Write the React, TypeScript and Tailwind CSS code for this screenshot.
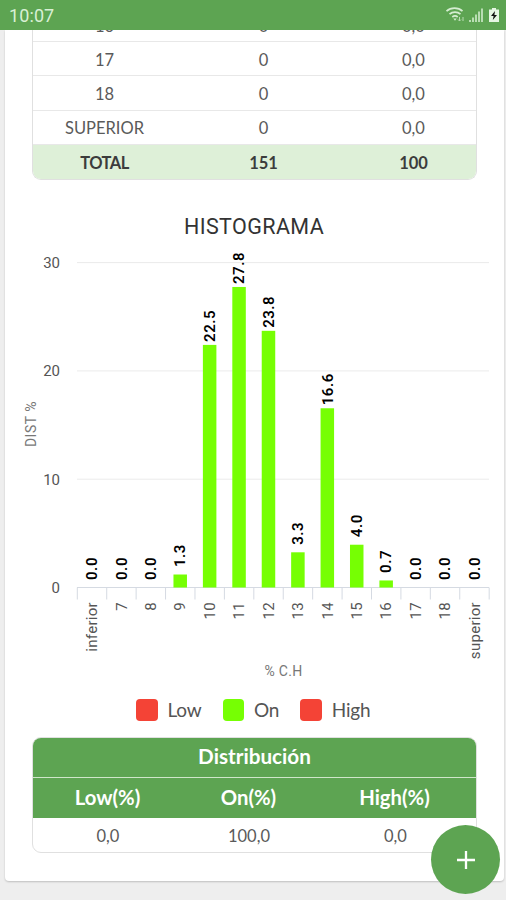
import clsx from "clsx";

const rows = [
  { label: "16", count: "0", dist: "0,0" },
  { label: "17", count: "0", dist: "0,0" },
  { label: "18", count: "0", dist: "0,0" },
  { label: "SUPERIOR", count: "0", dist: "0,0" },
];

const bars = [
  { label: "inferior", value: 0 },
  { label: "7", value: 0 },
  { label: "8", value: 0 },
  { label: "9", value: 1.2, text: "1.3" },
  { label: "10", value: 22.4, text: "22.5" },
  { label: "11", value: 27.75, text: "27.8" },
  { label: "12", value: 23.7, text: "23.8" },
  { label: "13", value: 3.25, text: "3.3" },
  { label: "14", value: 16.55, text: "16.6" },
  { label: "15", value: 3.95, text: "4.0" },
  { label: "16", value: 0.65, text: "0.7" },
  { label: "17", value: 0 },
  { label: "18", value: 0 },
  { label: "superior", value: 0 },
];

const legend = [
  { label: "Low", color: "bg-[#f44336]" },
  { label: "On", color: "bg-[#76ff03]" },
  { label: "High", color: "bg-[#f44336]" },
];

// plot area
const LEFT = 72;
const STEP = 29.42;
const BASE = 397.5;
const UNIT = 10.83;

const StatusBar = () => {
  return (
    <div className="relative z-10 flex h-[30px] items-center justify-between bg-[#5da452] pl-[9px] pr-[6px]">
      <span className="font-[Roboto] text-[18px] leading-none tracking-[0.1px] text-[#d9f0d5] pt-[2px]">10:07</span>

      <svg width="54" height="18" viewBox="0 0 54 18" fill="none">
        <g stroke="#d5edd1" strokeWidth="1.7">
          <path d="M.5 5.200c4.300-4 11.700-4 16 0" />
          <path d="M3.500 8.200c3-2.700 8-2.700 11 0" />
          <path d="M6.300 11c1.700-1.400 3.700-1.400 5.400 0" />
        </g>
        <path d="M7.300 12.600h3.400L9 14.800z" fill="#d5edd1" />
        <path d="M13.500 11v4m-1.500-1.500l1.500 1.500 1.500-1.500M17 15v-4" stroke="#b9ddb3" strokeWidth="1" />
        <g fill="#b9ddb3">
          <rect x="23" y="14" width="2" height="2" />
          <rect x="26" y="11.500" width="2" height="4.500" />
          <rect x="29" y="8.500" width="2" height="7.500" />
          <rect x="32" y="5.500" width="2" height="10.500" />
          <rect x="35" y="2.500" width="2" height="13.500" />
        </g>
        <path d="M46 2h4v1.500h3V16h-10V3.500h3z" fill="#e6f6e3" />
        <path d="M49 5l-4 5h2.600l-.8 4 4.200-5h-2.600z" fill="#111" />
      </svg>
    </div>
  );
};

const Histogram = () => {
  return (
    <svg className="block font-[Roboto]" width="499" height="500" viewBox="0 0 499 500">
      <text x="249" y="44" textAnchor="middle" className="fill-[#333] text-[21.5px] tracking-[0.4px]">HISTOGRAMA</text>

      {[0, 10, 20, 30].map((tick) => (
        <g key={tick}>
          <line x1={LEFT} x2="484" y1={BASE - tick * UNIT} y2={BASE - tick * UNIT} className={clsx(tick ? "stroke-[#ebebeb]" : "stroke-[#d5dae2]")} />
          <text x="55" y={BASE - tick * UNIT + 5.5} textAnchor="end" className="fill-[#555] text-[15px]">{tick}</text>
        </g>
      ))}

      {Array.from({ length: 15 }, (_, i) => (
        <line key={i} x1={LEFT + i * STEP + 0.3} x2={LEFT + i * STEP + 0.3} y1={BASE} y2={BASE + 12} className="stroke-[#d5dae2]" />
      ))}

      {bars.map(({ label, value, text = "0.0" }, i) => {
        const x = LEFT + (i + 0.5) * STEP;
        const top = BASE - value * UNIT;

        return (
          <g key={label}>
            <rect x={x - 6.5} y={top} width="13.5" height={BASE - top} className="fill-[#76ff03]" />
            <text transform={`translate(${x + 5.5} ${top - 19}) rotate(-90)`} textAnchor="middle" className="fill-black text-[15px] font-semibold tracking-[0.5px]">{text}</text>
            <text transform={`translate(${x + 5.5} ${BASE + 14.5}) rotate(-90)`} textAnchor="end" className="fill-[#555] text-[15px] tracking-[0.3px]">{label}</text>
          </g>
        );
      })}

      <text transform="translate(30.500 234) rotate(-90)" textAnchor="middle" className="fill-[#777] text-[14px] tracking-[0.5px]">DIST %</text>
      <text x="278.5" y="486" textAnchor="middle" className="fill-[#777] text-[14px] tracking-[0.3px]">% C.H</text>
    </svg>
  );
};

const App = () => {
  return (
    <div className="relative h-[900px] w-full overflow-hidden bg-[#eeeeee] font-[Lato,sans-serif]">
      <StatusBar />

      <div className="ml-[5px] mr-[2px] h-[851px] rounded-b-[4px] bg-white shadow-[0_1px_2px_rgba(0,0,0,0.2)]">
        {/* results table, its upper rows are scrolled under the status bar */}
        <div className="ml-[27px] flex h-[150px] w-[445px] flex-col justify-end rounded-b-[9px] border border-t-0 border-[#e0e0e0] text-[16.5px] text-[#5a5a5a]">
          {rows.map((row) => (
            <div key={row.label} className="grid h-[34.3px] shrink-0 grid-cols-[143px_175px_125px] items-center border-b border-[#e8e8e8] pt-[3px] text-center">
              <span>{row.label}</span>
              <span>{row.count}</span>
              <span>{row.dist}</span>
            </div>
          ))}
          <div className="grid h-[34px] shrink-0 grid-cols-[143px_175px_125px] items-center rounded-b-[8px] bg-[#def0d8] pt-[2px] text-center text-[16.5px] font-bold text-[#3c3c3c]">
            <span className="tracking-[-0.5px]">TOTAL</span>
            <span>151</span>
            <span>100</span>
          </div>
        </div>

        <div className="mt-[10px] h-[500px]">
          <Histogram />
        </div>

        <div className="ml-[131px] mt-[9px] flex h-[22px] items-center text-[19px] text-[#555]">
          {legend.map(({ label, color }) => (
            <div key={label} className="flex items-center">
              <span className={clsx("mr-[10px] size-[21.5px] rounded-[4px]", color)} />
              <span className="mr-[21px] tracking-[-0.2px]">{label}</span>
            </div>
          ))}
        </div>

        {/* distribution table */}
        <div className="ml-[27px] mt-[16px] h-[116px] w-[445px] overflow-hidden rounded-[9px] border border-[#e0e0e0] text-center">
          <div className="-mx-px -mt-px bg-[#5da452] text-[20.3px] font-bold text-white">
            <div className="flex h-[41px] items-center justify-center border-b border-[#cfe6ca] text-[20.7px]">Distribución</div>
            <div className="grid h-[40px] grid-cols-[151px_131px_161px] items-center pb-[2px]">
              <span>Low(%)</span>
              <span>On(%)</span>
              <span>High(%)</span>
            </div>
          </div>
          <div className="grid h-[35px] grid-cols-[150px_132px_161px] items-center pt-px text-[16.5px] text-[#5a5a5a]">
            <span>0,0</span>
            <span>100,0</span>
            <span>0,0</span>
          </div>
        </div>
      </div>

      <button className="absolute bottom-[6px] right-[6px] flex size-[69px] items-center justify-center rounded-full bg-[#5da452]">
        <svg width="18" height="18" viewBox="0 0 18 18" stroke="#fff" strokeWidth="2.3">
          <path d="M9 0v18M0 9h18" />
        </svg>
      </button>
    </div>
  );
};

export default App;
